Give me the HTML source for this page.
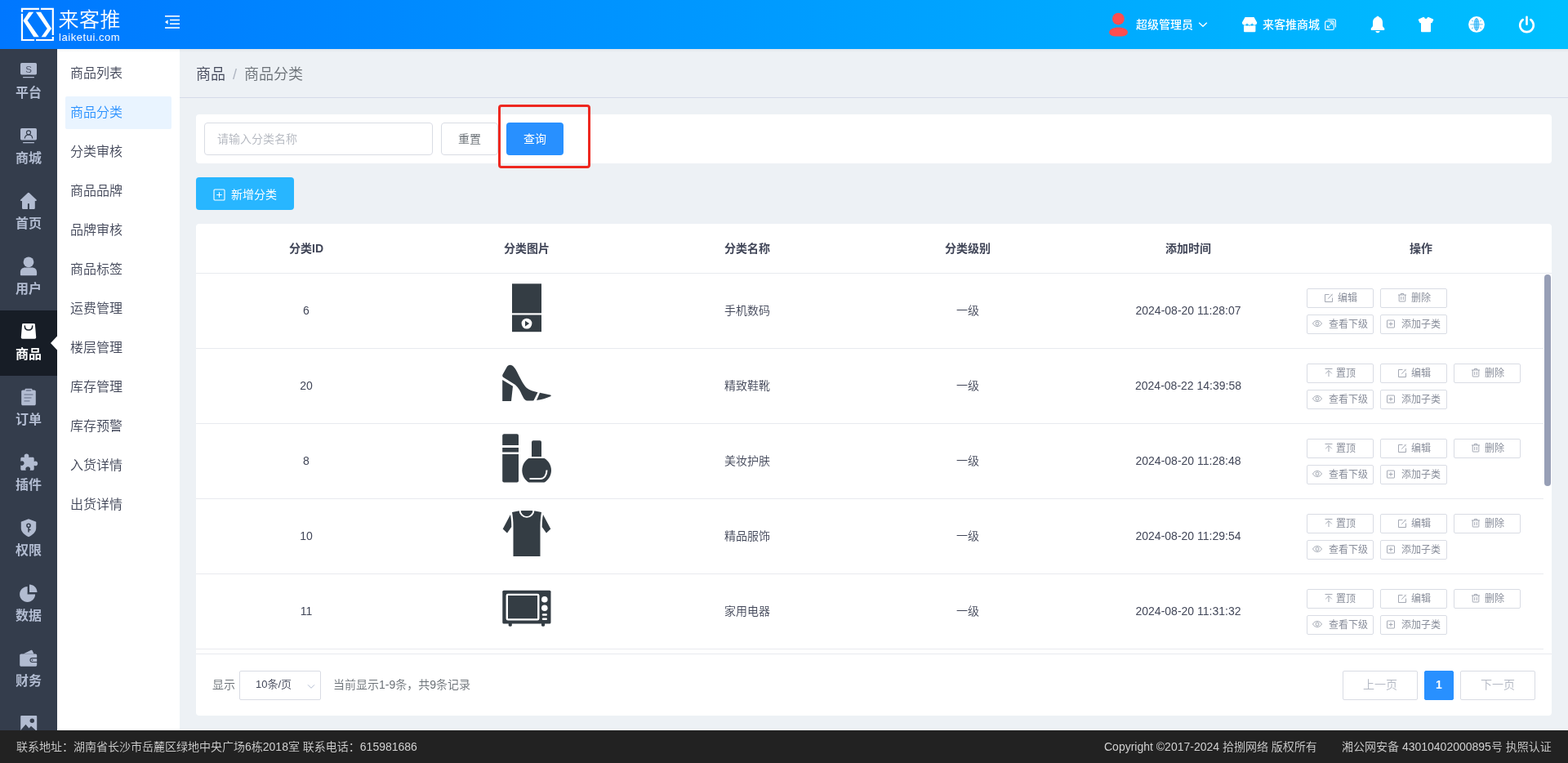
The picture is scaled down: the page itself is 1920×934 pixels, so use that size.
<!DOCTYPE html>
<html lang="zh-CN">
<head>
<meta charset="utf-8">
<title>商品分类</title>
<style>
*{box-sizing:border-box;margin:0;padding:0}
html,body{width:1920px;height:934px;overflow:hidden;background:#edf1f5;font-family:"Liberation Sans","Noto Sans CJK SC",sans-serif;font-size:14px;font-weight:350;color:#414658}
body{position:relative}
#app{position:absolute;left:0;top:0;width:1920px;height:934px;overflow:hidden;will-change:transform}
.abs{position:absolute}
svg{display:block}
/* header */
#hd{position:absolute;left:0;top:0;width:1920px;height:60px;background:linear-gradient(90deg,#0077ff 0%,#00c0ff 100%)}
#hd .t{position:absolute;color:#fff;white-space:nowrap}
#hd .u{position:absolute;top:0;height:60px;line-height:60px;color:#fff;font-size:14px;font-weight:500;white-space:nowrap}
/* left nav */
#nav{position:absolute;left:0;top:60px;width:70px;height:834px;background:#343d4c;overflow:hidden}
#nav .it{position:absolute;left:0;width:70px;height:80px}
#nav .it.on{background:#171d26}
#nav .it svg{position:absolute;left:23px;top:14px;width:24px;height:24px}
#nav .it span{position:absolute;left:0;width:70px;top:42px;line-height:24px;text-align:center;font-size:16px;font-weight:bold;color:#b2bcd1}
#nav .it.on span{color:#fff}
/* sub nav */
#sub{position:absolute;left:70px;top:60px;width:150px;height:834px;background:#fff}
#sub .s{position:absolute;left:10px;width:130px;height:40px;line-height:40px;padding-left:6px;font-size:16px;color:#414658;border-radius:2px}
#sub .s.on{background:#e9f4ff;color:#2890ff}
/* main */
#bc{position:absolute;left:220px;top:60px;width:1700px;height:60px;border-bottom:1px solid #d5dbe8}
#bc span{position:absolute;top:0;line-height:62px;font-size:18px;white-space:nowrap}
.card{position:absolute;background:#fff;border-radius:4px}
.btn{position:absolute;border-radius:4px;text-align:center;white-space:nowrap}
/* table */
#tb .th{position:absolute;top:0;height:60px;line-height:60px;text-align:center;font-weight:bold;font-size:14px;color:#414658}
#tb .row{position:absolute;left:0;width:1650px;height:92px;border-bottom:1px solid #e8eaef}
#tb .row .c{position:absolute;top:0;height:91px;line-height:91px;text-align:center;font-size:14px;color:#414658;white-space:nowrap}
#tb .row .pic{position:absolute;left:355px;top:0;width:100px;height:92px}
.ob{position:absolute;width:82px;height:24px;border:1px solid #d9dce4;border-radius:2px;background:#fff;font-size:12px;font-weight:400;color:#898e9b;line-height:22px;white-space:nowrap}
.ob svg{position:absolute;top:4px;width:12px;height:12px}
.ob span{position:absolute;top:0}
/* pager */
.pg{position:absolute;top:547px;height:36px;line-height:32px;border:1px solid #d9dce4;border-radius:2px;text-align:center;font-size:14px;color:#b4b9c4;background:#fff}
/* footer */
#ft{position:absolute;left:0;top:894px;width:1920px;height:40px;background:#222;color:#d0d0d0;font-size:14px;line-height:40px}
#ft span{position:absolute;top:0;white-space:nowrap}
</style>
</head>
<body>
<div id="app">
<div id="hd">
  <svg class="abs" style="left:25px;top:9px" width="42" height="42" viewBox="0 0 42 42">
    <path d="M23 1.850H1.950V5.850M1.950 7.800V40H17.100M19 40H39.800V35.900M39.800 33.950V1.850H24.900" fill="none" stroke="#fff" stroke-width="2.200"/>
    <path d="M10.300 5.850L3.350 16.150L16.400 36.200H22.800L8.600 15.900L16.150 5.850Z" fill="#fff"/>
    <path d="M18.900 5.850H25.050L38.100 25.900L30.900 36.200H25.600L32.800 25.900Z" fill="#fff"/>
  </svg>
  <div class="t" style="left:71.500px;top:6.500px;font-size:25px;line-height:34px;font-weight:350;letter-spacing:0.5px">来客推</div>
  <div class="t" style="left:72px;top:38px;font-size:13px;line-height:16px;letter-spacing:0.55px">laiketui.com</div>
  <svg class="abs" style="left:201px;top:18px" width="20" height="18" viewBox="0 0 20 18" fill="#fff">
    <rect x="1" y="1" width="18" height="1.600"/><rect x="7" y="5.700" width="12" height="1.600"/><rect x="7" y="10.400" width="12" height="1.600"/><rect x="1" y="15.200" width="18" height="1.600"/>
    <path d="M1 9L4.600 6.300V11.700Z"/>
  </svg>
  <svg class="abs" style="left:1357px;top:15px" width="26" height="31" viewBox="0 0 26 31"><circle cx="12.400" cy="8.100" r="7.400" fill="#ff4d4f"/><path d="M1.200 24.500C1.200 21 6 18.600 12.500 18.600S23.900 21 23.900 24.500C23.900 27.200 21 29.400 17 29.400H8C4 29.400 1.200 27.200 1.200 24.500Z" fill="#ff4d4f"/></svg>
  <div class="u" style="left:1391px">超级管理员</div>
  <svg class="abs" style="left:1467px;top:26px" width="12" height="8" viewBox="0 0 12 8"><path d="M1.200 1.700l4.800 4.600 4.800-4.600" fill="none" stroke="#fff" stroke-width="1.400"/></svg>
  <svg class="abs" style="left:1520px;top:20px" width="20" height="20" viewBox="0 0 20 20" fill="#fff"><path d="M4.600 .9H15.500L19.200 7.600a3.050 3.050 0 0 1-6.100 0a3.050 3.050 0 0 1-6.100 0a3.050 3.050 0 0 1-6.100 0Z"/><path d="M3 11.200c.8.300 1.700.2 2.500-.3c.9.700 2.100.700 3 0c.9.700 2.100.700 3 0c.9.700 2.100.700 3 0c.8.500 1.700.6 2.900.3V18a1.200 1.200 0 0 1-1.200 1.200H4.200A1.200 1.200 0 0 1 3 18Z"/></svg>
  <div class="u" style="left:1546px">来客推商城</div>
  <svg class="abs" style="left:1621px;top:22px" width="16" height="16" viewBox="0 0 16 16" fill="none" stroke="#fff" stroke-width="1.100"><rect x="1.700" y="3.900" width="10.600" height="10.600" rx="1.600"/><path d="M4.600 1.700H12.800a1.600 1.600 0 0 1 1.600 1.600V11.600"/><path d="M4.400 11.800L10.300 5.900M7.400 5.800h3v3M4.400 8.900v3h3" stroke-width="1"/></svg>
  <svg class="abs" style="left:1677px;top:19px" width="20" height="22" viewBox="0 0 20 22" fill="#fff"><path d="M10 .7c.9 0 1.500.5 1.700 1.300c2.600.8 4.300 3.100 4.300 6v4.300c0 .7.200 1.200.7 1.700l1.200 1.300c.3.300.4.600.4 1v.8c0 .6-.4 1-1 1H2.700c-.6 0-1-.4-1-1v-.8c0-.4.100-.7.400-1l1.200-1.300c.5-.5.700-1 .7-1.700V8c0-2.900 1.700-5.200 4.300-6c.2-.8.800-1.300 1.700-1.300Z"/><path d="M7.300 19.100h5.400c-.2 1.300-1.300 2.100-2.700 2.100s-2.500-.8-2.700-2.100Z"/></svg>
  <svg class="abs" style="left:1736px;top:20px" width="20" height="20" viewBox="0 0 20 20" fill="#fff"><path d="M6.600 .9H7.900Q8.400 3 10 3Q11.600 3 12.100 .9H13.400L18.900 3.500Q19.500 3.900 19.200 4.600L17.500 7.900Q17.200 8.400 16.600 8.200L16 7.900V18.200Q16 19.200 15 19.200H5Q4 19.200 4 18.200V7.900L3.400 8.200Q2.800 8.400 2.500 7.900L.8 4.600Q.5 3.900 1.100 3.500Z"/></svg>
  <svg class="abs" style="left:1797px;top:19px" width="22" height="22" viewBox="0 0 22 22"><circle cx="11" cy="10.900" r="9.900" fill="#fff"/><ellipse cx="11" cy="10.900" rx="2.900" ry="7.400" fill="#7fd6ff"/><g fill="none" stroke="#35b4f5" stroke-width=".8"><ellipse cx="11" cy="10.900" rx="2.900" ry="7.400"/><path d="M11 3.500v14.800M3.200 10.900h15.600M8.200 7.200h5.600M8.200 14.600h5.600M5 6l2 1M17 6l-2 1M5 15.800l2-1M17 15.800l-2-1"/></g></svg>
  <svg class="abs" style="left:1858px;top:18px" width="23" height="23" viewBox="0 0 23 23" fill="none" stroke="#fff" stroke-width="2.600" stroke-linecap="round"><path d="M6.700 6.100a8.300 8.300 0 1 0 9.600 0"/><path d="M11.500 2.800v9"/></svg>
</div>
<div id="nav">
  <div class="it" style="top:0px"><svg viewBox="0 0 24 24"><rect x="2" y="3" width="20" height="14.4" rx="1.6" fill="#b2bcd1"/><rect x="5" y="20" width="14" height="1.3" rx=".6" fill="#b2bcd1"/><text x="12" y="14.6" text-anchor="middle" font-family="Liberation Sans,sans-serif" font-size="11.5" fill="#4a5266">S</text></svg><span>平台</span></div>
  <div class="it" style="top:80px"><svg viewBox="0 0 24 24"><rect x="2" y="3" width="20" height="14.4" rx="1.6" fill="#b2bcd1"/><rect x="5" y="20" width="14" height="1.3" rx=".6" fill="#b2bcd1"/><circle cx="12" cy="8.3" r="2.5" fill="none" stroke="#343d4c" stroke-width="1.2"/><path d="M7.3 15.6c0-2.8 2-4.6 4.7-4.6s4.700 1.800 4.700 4.600" fill="none" stroke="#343d4c" stroke-width="1.200"/></svg><span>商城</span></div>
  <div class="it" style="top:160px"><svg viewBox="0 0 24 24"><path d="M11.900 1.800c.500 0 .900.200 1.300.600l8.400 8.200c.600.600.300 1.400-.600 1.400h-1.200v8.400c0 .900-.600 1.600-1.600 1.600h-5.300v-6.100c0-.500-.300-.800-.800-.800h-.400c-.500 0-.800.300-.800.800v6.100h-5.300c-1 0-1.600-.700-1.600-1.600v-8.400h-1.200c-.900 0-1.200-.800-.600-1.400l8.400-8.200c.400-.400.800-.600 1.300-.600z" fill="#b2bcd1"/></svg><span>首页</span></div>
  <div class="it" style="top:240px"><svg viewBox="0 0 24 24"><circle cx="12" cy="6.800" r="6.400" fill="#b2bcd1"/><path d="M1.900 21.900v-2.700c0-3.600 2.600-5.700 6-5.700h8.200c3.400 0 6 2.100 6 5.700v2.700c0 .800-.500 1.300-1.300 1.300h-17.600c-.800 0-1.300-.500-1.300-1.300z" fill="#b2bcd1"/></svg><span>用户</span></div>
  <div class="it on" style="top:320px"><svg viewBox="0 0 24 24"><path d="M5.700 1.900h12.600c.900 0 1.500.500 1.600 1.400l1.300 15.500c.100 1.200-.600 2-1.800 2h-14.800c-1.200 0-1.900-.800-1.800-2l1.300-15.500c.100-.900.700-1.400 1.600-1.400z" fill="#ffffff"/><path d="M7.300 5c0 3 2 5 4.700 5s4.700-2 4.700-5" fill="none" stroke="#171d26" stroke-width="1.500" stroke-linecap="round"/></svg><span>商品</span></div>
  <div class="it" style="top:400px"><svg viewBox="0 0 24 24"><path d="M5 3.600h2.500v-.6c0-.800.500-1.300 1.300-1.300h6.400c.800 0 1.300.500 1.300 1.300v.6h2.500c1.100 0 1.800.700 1.800 1.800v15c0 1.100-.700 1.800-1.800 1.800h-14c-1.100 0-1.800-.700-1.800-1.800v-15c0-1.100.700-1.800 1.800-1.800z" fill="#b2bcd1"/><rect x="8.800" y="3" width="6.400" height="2" rx=".5" fill="#7e889f"/><rect x="6.500" y="8.300" width="11" height="1.500" fill="#7e889f"/><rect x="6.500" y="12.200" width="9" height="1.500" fill="#7e889f"/><rect x="6.500" y="16.100" width="7" height="1.500" fill="#7e889f"/></svg><span>订单</span></div>
  <div class="it" style="top:480px"><svg viewBox="0 0 24 24"><path d="M9.500 1.500c1.700 0 2.900 1.200 2.900 2.700 0 .600-.200 1.100-.400 1.500h5.200c.900 0 1.500.600 1.500 1.500v3.800c.500-.300 1-.500 1.700-.500 1.600 0 2.800 1.200 2.800 2.900s-1.200 2.900-2.800 2.900c-.700 0-1.200-.200-1.700-.500v4.400c0 .900-.600 1.500-1.500 1.500h-3.600c.300-.500.500-1 .500-1.600 0-1.600-1.300-2.800-2.900-2.800s-2.900 1.200-2.900 2.800c0 .600.200 1.100.500 1.600h-5c-.900 0-1.500-.600-1.500-1.500v-4.800c.500.300 1 .500 1.600.500 1.500 0 2.700-1.200 2.700-2.800s-1.200-2.800-2.700-2.800c-.600 0-1.100.200-1.600.500v-3.600c0-.900.600-1.500 1.500-1.500h3.200c-.200-.400-.400-.900-.400-1.500 0-1.500 1.200-2.700 2.900-2.700z" fill="#b2bcd1"/></svg><span>插件</span></div>
  <div class="it" style="top:560px"><svg viewBox="0 0 24 24"><path d="M12 1.200l8.600 3.200c.400.200.600.500.600.900v7.200c0 4.300-3.600 8.200-9.200 10.700-5.600-2.500-9.200-6.400-9.200-10.700v-7.200c0-.400.200-.700.600-.900z" fill="#b2bcd1"/><circle cx="12" cy="9.300" r="2.100" fill="none" stroke="#343d4c" stroke-width="1.500"/><path d="M12 11.400v6.200M12 14.600h2.600" fill="none" stroke="#343d4c" stroke-width="1.500"/></svg><span>权限</span></div>
  <div class="it" style="top:640px"><svg viewBox="0 0 24 24"><path d="M10.600 3.900v9.500h9.500c0 5.200-4.300 9.500-9.500 9.500s-9.500-4.300-9.500-9.500 4.300-9.500 9.500-9.500z" fill="#b2bcd1"/><path d="M13 1.500c5 0 9.400 4.100 9.500 9.400h-9.500z" fill="#b2bcd1"/></svg><span>数据</span></div>
  <div class="it" style="top:720px"><svg viewBox="0 0 24 24"><path d="M5.500 6.400l9.600-4.600c.700-.300 1.300-.100 1.600.600l1.800 4z" fill="#b2bcd1"/><path d="M3 6.600h17.400c1.100 0 1.800.700 1.800 1.800v2.700h-5.800c-1.700 0-3 1.300-3 3s1.300 3 3 3h5.800v2.800c0 1.100-.700 1.800-1.800 1.800h-17.400c-1.100 0-1.800-.700-1.800-1.800v-11.500c0-1.100.700-1.800 1.800-1.800z" fill="#b2bcd1"/><path d="M16.500 12.200h5.700v3.800h-5.700c-1.100 0-1.900-.800-1.900-1.900s.8-1.900 1.900-1.900zm.2 1.100a.8.8 0 1 0 0 1.600.8.8 0 0 0 0-1.600z" fill="#b2bcd1"/></svg><span>财务</span></div>
  <div class="it" style="top:800px"><svg viewBox="0 0 24 24"><rect x="2.200" y="2" width="20" height="20" rx="1" fill="#b2bcd1"/><circle cx="16.300" cy="8.300" r="2.700" fill="#343d4c"/><path d="M2.200 20l6.300-7.200 4 4.700 2.500-2.700 5.800 5.200v2h-18.600z" fill="#343d4c"/></svg><span>图片</span></div>
  <svg class="abs" style="left:61px;top:351px" width="9" height="18" viewBox="0 0 9 18"><path d="M9 0.500L1 9l8 8.500z" fill="#fff"/></svg>
</div>
<div id="sub">
  <div class="s" style="top:10px">商品列表</div>
  <div class="s on" style="top:58px">商品分类</div>
  <div class="s" style="top:106px">分类审核</div>
  <div class="s" style="top:154px">商品品牌</div>
  <div class="s" style="top:202px">品牌审核</div>
  <div class="s" style="top:250px">商品标签</div>
  <div class="s" style="top:298px">运费管理</div>
  <div class="s" style="top:346px">楼层管理</div>
  <div class="s" style="top:394px">库存管理</div>
  <div class="s" style="top:442px">库存预警</div>
  <div class="s" style="top:490px">入货详情</div>
  <div class="s" style="top:538px">出货详情</div>
</div>
<div id="bc">
  <span style="left:20px;color:#414658">商品</span>
  <span style="left:65px;color:#b0b6c2">/</span>
  <span style="left:79px;color:#6a7076">商品分类</span>
</div>
<div class="card" style="left:240px;top:140px;width:1660px;height:60px">
  <div class="abs" style="left:10px;top:10px;width:280px;height:40px;border:1px solid #d9dce4;border-radius:4px;line-height:38px;padding-left:15px;font-size:14px;color:#b2b6be">请输入分类名称</div>
  <div class="btn" style="left:300px;top:10px;width:70px;height:40px;border:1px solid #d9dce4;line-height:38px;font-size:14px;color:#6a7076;background:#fff">重置</div>
  <div class="btn" style="left:380px;top:10px;width:70px;height:40px;line-height:40px;font-size:14px;font-weight:400;color:#fff;background:#2890ff">查询</div>
</div>
<div class="abs" style="left:609.700px;top:127.500px;width:113.500px;height:78px;border:3px solid #ee2820;border-radius:4px"></div>
<div class="btn" style="left:240px;top:217px;width:120px;height:40px;background:#28b6ff;color:#fff;font-size:14px;font-weight:400;line-height:40px">
  <svg class="abs" style="left:20.500px;top:13.500px" width="15" height="15" viewBox="0 0 15 15" fill="none" stroke="#fff" stroke-width="1.100"><rect x="1" y="1" width="13" height="13" rx="1"/><path d="M7.500 4.200v6.600M4.200 7.500h6.600"/></svg>
  <span class="abs" style="left:43px;top:1px">新增分类</span>
</div>
<div class="card" id="tb" style="left:240px;top:274px;width:1660px;height:602px;overflow:hidden">
  <div class="abs" style="left:0;top:60px;width:1660px;height:1px;background:#e8eaef"></div>
  <div class="th" style="left:0;width:270px">分类ID</div>
  <div class="th" style="left:270px;width:270px">分类图片</div>
  <div class="th" style="left:540px;width:270px">分类名称</div>
  <div class="th" style="left:810px;width:270px">分类级别</div>
  <div class="th" style="left:1080px;width:270px">添加时间</div>
  <div class="th" style="left:1350px;width:300px">操作</div>
  <div class="row" style="top:61px">
    <div class="c" style="left:0;width:270px">6</div>
    <svg class="pic" viewBox="0 0 100 92"><rect x="32" y="12.300" width="36" height="36" fill="#343d44"/><rect x="32" y="50.500" width="36" height="20.700" fill="#343d44"/><circle cx="50" cy="61.100" r="6.400" fill="#fff"/><path d="M48 57.700l5.200 3.400-5.200 3.400z" fill="#343d44"/></svg>
    <div class="c" style="left:540px;width:270px">手机数码</div>
    <div class="c" style="left:810px;width:270px">一级</div>
    <div class="c" style="left:1080px;width:270px">2024-08-20 11:28:07</div>
    <div class="ob" style="left:1360px;top:18px"><svg style="left:20px" viewBox="0 0 12 12" fill="none" stroke="#9a9fab" stroke-width=".9"><path d="M6.500 2.500h-5v9h9v-5"/><path d="M5.300 7.700l4.200-4.500 1.300-1.200M8.600 2.300l1.900 1.900"/></svg><span style="left:37px">编辑</span></div><div class="ob" style="left:1450px;top:18px"><svg style="left:20px" viewBox="0 0 12 12" fill="none" stroke="#9a9fab" stroke-width=".9"><path d="M1 3h10M4.300 3v-1.500h3.400v1.500M2.200 3v7.500a.5.500 0 0 0 .5.500h6.600a.5.500 0 0 0 .5-.5v-7.500M4.700 5v4M7.300 5v4"/></svg><span style="left:37px">删除</span></div><div class="ob" style="left:1360px;top:50px"><svg style="left:6px" viewBox="0 0 12 12" fill="none" stroke="#9a9fab" stroke-width=".9"><path d="M.5 6c1.400-2.300 3.300-3.500 5.500-3.500s4.100 1.200 5.500 3.500c-1.400 2.300-3.300 3.500-5.500 3.500s-4.100-1.200-5.500-3.500z"/><circle cx="6" cy="6" r="2"/></svg><span style="left:26px">查看下级</span></div><div class="ob" style="left:1450px;top:50px"><svg style="left:6px" viewBox="0 0 12 12" fill="none" stroke="#9a9fab" stroke-width=".9"><rect x="1.500" y="2" width="9" height="9" rx=".5"/><path d="M6 4v5M3.500 6.500h5"/></svg><span style="left:25px">添加子类</span></div>
  </div>
  <div class="row" style="top:153px">
    <div class="c" style="left:0;width:270px">20</div>
    <svg class="pic" viewBox="0 0 100 92"><path d="M29.500 19.700C33 19.500 36 24 38 28C42 36 46 44 49.500 47.500C54 51 58 52 63.500 53.200L58.600 63C58 63.600 57 63.600 50.500 63.600C47 63.600 45 58 41.500 51C39 46.500 37 44.500 33.500 42.400L21.500 35C20 34 20 32.500 20.500 31.500L25.500 22.500C26.500 20.500 28 19.700 29.500 19.700Z" fill="#343d44"/><path d="M20.200 38L33 45.800L31 64L20.200 64Z" fill="#343d44"/><path d="M66 53.700L79 56.600C80 57 80 57.800 79 58.200C74 60.500 68 62 62 62.900Z" fill="#343d44"/></svg>
    <div class="c" style="left:540px;width:270px">精致鞋靴</div>
    <div class="c" style="left:810px;width:270px">一级</div>
    <div class="c" style="left:1080px;width:270px">2024-08-22 14:39:58</div>
    <div class="ob" style="left:1360px;top:18px"><svg style="left:20px" viewBox="0 0 12 12" fill="none" stroke="#9a9fab" stroke-width=".9"><path d="M1.500 1.500h9M6 3.500v7.500M2.200 7.300l3.800-3.800 3.800 3.800"/></svg><span style="left:35px">置顶</span></div><div class="ob" style="left:1450px;top:18px"><svg style="left:20px" viewBox="0 0 12 12" fill="none" stroke="#9a9fab" stroke-width=".9"><path d="M6.500 2.500h-5v9h9v-5"/><path d="M5.300 7.700l4.200-4.500 1.300-1.200M8.600 2.300l1.900 1.900"/></svg><span style="left:37px">编辑</span></div><div class="ob" style="left:1540px;top:18px"><svg style="left:20px" viewBox="0 0 12 12" fill="none" stroke="#9a9fab" stroke-width=".9"><path d="M1 3h10M4.300 3v-1.500h3.400v1.500M2.200 3v7.500a.5.500 0 0 0 .5.500h6.600a.5.500 0 0 0 .5-.5v-7.500M4.700 5v4M7.300 5v4"/></svg><span style="left:37px">删除</span></div><div class="ob" style="left:1360px;top:50px"><svg style="left:6px" viewBox="0 0 12 12" fill="none" stroke="#9a9fab" stroke-width=".9"><path d="M.5 6c1.400-2.300 3.300-3.500 5.500-3.500s4.100 1.200 5.500 3.500c-1.400 2.300-3.300 3.500-5.500 3.500s-4.100-1.200-5.500-3.500z"/><circle cx="6" cy="6" r="2"/></svg><span style="left:26px">查看下级</span></div><div class="ob" style="left:1450px;top:50px"><svg style="left:6px" viewBox="0 0 12 12" fill="none" stroke="#9a9fab" stroke-width=".9"><rect x="1.500" y="2" width="9" height="9" rx=".5"/><path d="M6 4v5M3.500 6.500h5"/></svg><span style="left:25px">添加子类</span></div>
  </div>
  <div class="row" style="top:245px">
    <div class="c" style="left:0;width:270px">8</div>
    <svg class="pic" viewBox="0 0 100 92"><path d="M22.200 12.300h15.800a2 2 0 0 1 2 2v11.700h-19.800v-11.700a2 2 0 0 1 2-2z" fill="#343d44"/><rect x="20.200" y="29" width="19.800" height="5.500" fill="#343d44"/><path d="M20.200 37h19.800v32.500a2 2 0 0 1-2 2h-15.800a2 2 0 0 1-2-2z" fill="#343d44"/><path d="M58 20.300h8a2 2 0 0 1 2 2v17.700h-12v-17.700a2 2 0 0 1 2-2z" fill="#343d44"/><path d="M52.500 42h19c4.500 2.500 8.500 8 8.500 14.800s-4 12.200-8.500 14.700h-19c-4.500-2.500-8.200-8-8.200-14.700s3.700-12.300 8.200-14.800z" fill="#343d44"/><path d="M53.500 67h13.500c4.500 0 7.500-4.500 7.500-10.500" fill="none" stroke="#fff" stroke-width="2"/></svg>
    <div class="c" style="left:540px;width:270px">美妆护肤</div>
    <div class="c" style="left:810px;width:270px">一级</div>
    <div class="c" style="left:1080px;width:270px">2024-08-20 11:28:48</div>
    <div class="ob" style="left:1360px;top:18px"><svg style="left:20px" viewBox="0 0 12 12" fill="none" stroke="#9a9fab" stroke-width=".9"><path d="M1.500 1.500h9M6 3.500v7.500M2.200 7.300l3.800-3.800 3.800 3.800"/></svg><span style="left:35px">置顶</span></div><div class="ob" style="left:1450px;top:18px"><svg style="left:20px" viewBox="0 0 12 12" fill="none" stroke="#9a9fab" stroke-width=".9"><path d="M6.500 2.500h-5v9h9v-5"/><path d="M5.300 7.700l4.200-4.500 1.300-1.200M8.600 2.300l1.900 1.900"/></svg><span style="left:37px">编辑</span></div><div class="ob" style="left:1540px;top:18px"><svg style="left:20px" viewBox="0 0 12 12" fill="none" stroke="#9a9fab" stroke-width=".9"><path d="M1 3h10M4.300 3v-1.500h3.400v1.500M2.200 3v7.500a.5.500 0 0 0 .5.500h6.600a.5.500 0 0 0 .5-.5v-7.500M4.700 5v4M7.300 5v4"/></svg><span style="left:37px">删除</span></div><div class="ob" style="left:1360px;top:50px"><svg style="left:6px" viewBox="0 0 12 12" fill="none" stroke="#9a9fab" stroke-width=".9"><path d="M.5 6c1.400-2.300 3.300-3.500 5.500-3.500s4.100 1.200 5.500 3.500c-1.400 2.300-3.300 3.500-5.500 3.500s-4.100-1.200-5.500-3.500z"/><circle cx="6" cy="6" r="2"/></svg><span style="left:26px">查看下级</span></div><div class="ob" style="left:1450px;top:50px"><svg style="left:6px" viewBox="0 0 12 12" fill="none" stroke="#9a9fab" stroke-width=".9"><rect x="1.500" y="2" width="9" height="9" rx=".5"/><path d="M6 4v5M3.500 6.500h5"/></svg><span style="left:25px">添加子类</span></div>
  </div>
  <div class="row" style="top:337px">
    <div class="c" style="left:0;width:270px">10</div>
    <svg class="pic" viewBox="0 0 100 92"><path d="M32 16l9-1.800h18l9 1.800c-1 6-1.500 11-1.500 17v37h-33v-37c0-6-.5-11-1.500-17z" fill="#343d44"/><circle cx="50" cy="13.200" r="8.500" fill="none" stroke="#fff" stroke-width="2"/><rect x="40" y="3" width="20" height="11" fill="#fff"/><path d="M43.300 14.200h13.400a6.700 6.700 0 0 1-13.400 0z" fill="#343d44"/><path d="M30 19c1 5 1.300 10 1.300 15l-5.300 7.500-5.300-5z" fill="#343d44"/><path d="M70 19c-1 5-1.300 10-1.300 15l5.300 7.500 5.300-5z" fill="#343d44"/></svg>
    <div class="c" style="left:540px;width:270px">精品服饰</div>
    <div class="c" style="left:810px;width:270px">一级</div>
    <div class="c" style="left:1080px;width:270px">2024-08-20 11:29:54</div>
    <div class="ob" style="left:1360px;top:18px"><svg style="left:20px" viewBox="0 0 12 12" fill="none" stroke="#9a9fab" stroke-width=".9"><path d="M1.500 1.500h9M6 3.500v7.500M2.200 7.300l3.800-3.800 3.800 3.800"/></svg><span style="left:35px">置顶</span></div><div class="ob" style="left:1450px;top:18px"><svg style="left:20px" viewBox="0 0 12 12" fill="none" stroke="#9a9fab" stroke-width=".9"><path d="M6.500 2.500h-5v9h9v-5"/><path d="M5.300 7.700l4.200-4.500 1.300-1.200M8.600 2.300l1.900 1.900"/></svg><span style="left:37px">编辑</span></div><div class="ob" style="left:1540px;top:18px"><svg style="left:20px" viewBox="0 0 12 12" fill="none" stroke="#9a9fab" stroke-width=".9"><path d="M1 3h10M4.300 3v-1.500h3.400v1.500M2.200 3v7.500a.5.500 0 0 0 .5.500h6.600a.5.500 0 0 0 .5-.5v-7.500M4.700 5v4M7.300 5v4"/></svg><span style="left:37px">删除</span></div><div class="ob" style="left:1360px;top:50px"><svg style="left:6px" viewBox="0 0 12 12" fill="none" stroke="#9a9fab" stroke-width=".9"><path d="M.5 6c1.400-2.300 3.300-3.500 5.500-3.500s4.100 1.200 5.500 3.500c-1.400 2.300-3.300 3.500-5.500 3.500s-4.100-1.200-5.500-3.500z"/><circle cx="6" cy="6" r="2"/></svg><span style="left:26px">查看下级</span></div><div class="ob" style="left:1450px;top:50px"><svg style="left:6px" viewBox="0 0 12 12" fill="none" stroke="#9a9fab" stroke-width=".9"><rect x="1.500" y="2" width="9" height="9" rx=".5"/><path d="M6 4v5M3.500 6.500h5"/></svg><span style="left:25px">添加子类</span></div>
  </div>
  <div class="row" style="top:429px">
    <div class="c" style="left:0;width:270px">11</div>
    <svg class="pic" viewBox="0 0 100 92"><rect x="20.300" y="19.700" width="59.200" height="40.800" rx="1.600" fill="#343d44"/><rect x="25.800" y="24.900" width="38.500" height="30.500" rx="1.200" fill="none" stroke="#fff" stroke-width="2.400"/><circle cx="71.800" cy="30.700" r="3.800" fill="#fff"/><circle cx="71.800" cy="41.300" r="3.800" fill="#fff"/><rect x="68.800" y="48.300" width="6.200" height="2.400" rx="1.200" fill="#fff"/><rect x="68.800" y="53.500" width="6.200" height="2.400" rx="1.200" fill="#fff"/><path d="M27.700 60h4.100v2.600c0 .7-.5 1.200-1.200 1.200h-1.700c-.7 0-1.200-.5-1.200-1.200z" fill="#343d44"/><path d="M68 60h4.100v2.600c0 .7-.5 1.200-1.200 1.200h-1.700c-.7 0-1.200-.5-1.200-1.200z" fill="#343d44"/></svg>
    <div class="c" style="left:540px;width:270px">家用电器</div>
    <div class="c" style="left:810px;width:270px">一级</div>
    <div class="c" style="left:1080px;width:270px">2024-08-20 11:31:32</div>
    <div class="ob" style="left:1360px;top:18px"><svg style="left:20px" viewBox="0 0 12 12" fill="none" stroke="#9a9fab" stroke-width=".9"><path d="M1.500 1.500h9M6 3.500v7.500M2.200 7.300l3.800-3.800 3.800 3.800"/></svg><span style="left:35px">置顶</span></div><div class="ob" style="left:1450px;top:18px"><svg style="left:20px" viewBox="0 0 12 12" fill="none" stroke="#9a9fab" stroke-width=".9"><path d="M6.500 2.500h-5v9h9v-5"/><path d="M5.300 7.700l4.200-4.500 1.300-1.200M8.600 2.300l1.900 1.900"/></svg><span style="left:37px">编辑</span></div><div class="ob" style="left:1540px;top:18px"><svg style="left:20px" viewBox="0 0 12 12" fill="none" stroke="#9a9fab" stroke-width=".9"><path d="M1 3h10M4.300 3v-1.500h3.400v1.500M2.200 3v7.500a.5.500 0 0 0 .5.500h6.600a.5.500 0 0 0 .5-.5v-7.500M4.700 5v4M7.300 5v4"/></svg><span style="left:37px">删除</span></div><div class="ob" style="left:1360px;top:50px"><svg style="left:6px" viewBox="0 0 12 12" fill="none" stroke="#9a9fab" stroke-width=".9"><path d="M.5 6c1.400-2.300 3.300-3.500 5.500-3.500s4.100 1.200 5.500 3.500c-1.400 2.300-3.300 3.500-5.500 3.500s-4.100-1.200-5.500-3.500z"/><circle cx="6" cy="6" r="2"/></svg><span style="left:26px">查看下级</span></div><div class="ob" style="left:1450px;top:50px"><svg style="left:6px" viewBox="0 0 12 12" fill="none" stroke="#9a9fab" stroke-width=".9"><rect x="1.500" y="2" width="9" height="9" rx=".5"/><path d="M6 4v5M3.500 6.500h5"/></svg><span style="left:25px">添加子类</span></div>
  </div>
  <div class="abs" style="left:0;top:526px;width:1660px;height:1px;background:#e8eaef"></div>
  <div class="abs" style="left:1651px;top:62px;width:8px;height:259px;border-radius:4px;background:#979fb6"></div>
  <div class="abs" style="left:20px;top:546px;line-height:36px;font-size:14px;color:#6a7076">显示</div>
  <div class="pg" style="left:53px;width:100px;font-size:13px;color:#414658;text-align:left;padding-left:19px">10条/页</div>
  <svg class="abs" style="left:136px;top:563px" width="10" height="7" viewBox="0 0 10 7"><path d="M1 1.300l4 4 4-4" fill="none" stroke="#b2bcd1" stroke-width="1"/></svg>
  <div class="abs" style="left:168px;top:546px;line-height:36px;font-size:14px;color:#6a7076;white-space:nowrap">当前显示1-9条，共9条记录</div>
  <div class="pg" style="left:1404px;width:92px">上一页</div>
  <div class="pg" style="left:1504px;width:36px;background:#2890ff;border-color:#2890ff;color:#fff;font-weight:bold">1</div>
  <div class="pg" style="left:1548px;width:92px">下一页</div>
</div>
<div class="abs" style="left:70px;top:60px;width:1850px;height:4px;background:linear-gradient(rgba(0,20,45,.05),rgba(0,20,45,0))"></div>
<div id="ft">
  <span style="left:20px">联系地址：湖南省长沙市岳麓区绿地中央广场6栋2018室 联系电话：615981686</span>
  <span style="left:1352px">Copyright ©2017-2024 拾捌网络 版权所有</span>
  <span style="left:1643px">湘公网安备 43010402000895号 执照认证</span>
</div>
</div>
</body>
</html>
